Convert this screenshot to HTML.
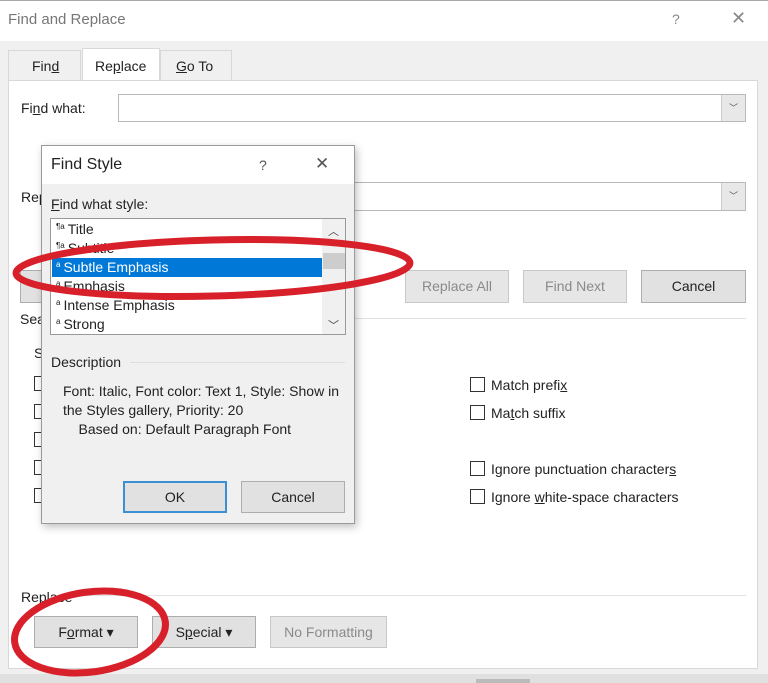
<!DOCTYPE html><html><head><style>
body{margin:0;width:768px;height:683px;background:#f0f0f0;font-family:"Liberation Sans",sans-serif;font-size:14px;color:#222;position:relative;overflow:hidden}
.a{position:absolute}
.btn{position:absolute;background:#e1e1e1;border:1px solid #adadad;box-sizing:border-box;text-align:center;font-size:14px}
.dis{color:#8a8a8a;border-color:#c8c8c8;background:#e6e6e6}
.cb{position:absolute;width:13px;height:13px;border:1px solid #333;background:#fff}
.inp{position:absolute;background:#fff;border:1px solid #b8b8b8;box-sizing:border-box}
.dd{position:absolute;right:0;top:0;width:24px;height:100%;background:#e8e8e8;border-left:1px solid #ccc;box-sizing:border-box;font-size:9px;color:#555;text-align:center;line-height:26px}
u{text-decoration:underline}
.row{position:absolute;left:1px;width:270px;height:19px;line-height:19px;padding-left:4px;box-sizing:border-box;white-space:nowrap}
.row i{font-style:normal;font-size:8px;position:relative;top:-5px;margin-right:3px}
</style></head><body>
<div class="a" style="left:0;top:0;width:768px;height:40px;background:#fff;border-top:1px solid #aaa"></div>
<div class="a" style="left:8px;top:11px;font-size:15px;color:#777">Find and Replace</div>
<div class="a" style="left:672px;top:11px;color:#888;font-size:14px">?</div>
<div class="a" style="left:731px;top:8px;color:#888;font-size:18px">✕</div>
<div class="a" style="left:8px;top:50px;width:73px;height:30px;border:1px solid #d8d8d8;border-bottom:none;box-sizing:border-box"></div>
<div class="a" style="left:32px;top:58px">Fin<u>d</u></div>
<div class="a" style="left:82px;top:48px;width:78px;height:34px;background:#fff;border:1px solid #d8d8d8;border-bottom:none;box-sizing:border-box"></div>
<div class="a" style="left:95px;top:58px">Re<u>p</u>lace</div>
<div class="a" style="left:160px;top:50px;width:72px;height:30px;border:1px solid #d8d8d8;border-bottom:none;box-sizing:border-box"></div>
<div class="a" style="left:176px;top:58px"><u>G</u>o To</div>
<div class="a" style="left:8px;top:80px;width:750px;height:589px;background:#fff;border:1px solid #d8d8d8;box-sizing:border-box"></div>
<div class="a" style="left:21px;top:100px">Fi<u>n</u>d what:</div>
<div class="inp" style="left:118px;top:94px;width:628px;height:28px"><div class="dd">﹀</div></div>
<div class="a" style="left:21px;top:189px">Rep</div>
<div class="inp" style="left:118px;top:182px;width:628px;height:29px"><div class="dd">﹀</div></div>
<div class="btn" style="left:20px;top:270px;width:100px;height:33px"></div>
<div class="btn dis" style="left:405px;top:270px;width:104px;height:33px;line-height:31px">Replace All</div>
<div class="btn dis" style="left:523px;top:270px;width:104px;height:33px;line-height:31px">Find Next</div>
<div class="btn" style="left:641px;top:270px;width:105px;height:33px;line-height:31px">Cancel</div>
<div class="a" style="left:20px;top:318px;width:726px;height:1px;background:#e3e3e3"></div>
<div class="a" style="left:20px;top:311px">Sea</div>
<div class="a" style="left:34px;top:345px">S</div>
<div class="cb" style="left:34px;top:376px"></div><div class="cb" style="left:34px;top:404px"></div><div class="cb" style="left:34px;top:432px"></div><div class="cb" style="left:34px;top:460px"></div><div class="cb" style="left:34px;top:488px"></div>
<div class="cb" style="left:470px;top:377px"></div><div class="a" style="left:491px;top:377px">Match prefi<u>x</u></div>
<div class="cb" style="left:470px;top:405px"></div><div class="a" style="left:491px;top:405px">Ma<u>t</u>ch suffix</div>
<div class="cb" style="left:470px;top:461px"></div><div class="a" style="left:491px;top:461px">Ignore punctuation character<u>s</u></div>
<div class="cb" style="left:470px;top:489px"></div><div class="a" style="left:491px;top:489px">Ignore <u>w</u>hite-space characters</div>
<div class="a" style="left:70px;top:595px;width:676px;height:1px;background:#e3e3e3"></div>
<div class="a" style="left:21px;top:589px">Replace</div>
<div class="btn" style="left:34px;top:616px;width:104px;height:32px;line-height:30px">F<u>o</u>rmat ▾</div>
<div class="btn" style="left:152px;top:616px;width:104px;height:32px;line-height:30px">S<u>p</u>ecial ▾</div>
<div class="btn dis" style="left:270px;top:616px;width:117px;height:32px;line-height:30px">No Formatting</div>
<div class="a" style="left:0;top:674px;width:768px;height:9px;background:#e0e0e0"></div>
<div class="a" style="left:476px;top:679px;width:54px;height:4px;background:#bbb"></div>

<div class="a" style="left:41px;top:145px;width:314px;height:379px;background:#f0f0f0;border:1px solid #9a9a9a;box-sizing:border-box;box-shadow:2px 3px 8px rgba(0,0,0,.25)"></div>
<div class="a" style="left:42px;top:146px;width:312px;height:38px;background:#fff"></div>
<div class="a" style="left:51px;top:156px;font-size:16px">Find Style</div>
<div class="a" style="left:259px;top:157px;color:#555">?</div>
<div class="a" style="left:315px;top:154px;color:#555;font-size:17px">✕</div>
<div class="a" style="left:51px;top:196px"><u>F</u>ind what style:</div>
<div class="a" style="left:50px;top:218px;width:296px;height:117px;background:#fff;border:1px solid #999;box-sizing:border-box;overflow:hidden">
<div class="a" style="left:271px;top:0;width:23px;height:115px;background:#f0f0f0"></div>
<div class="a" style="left:272px;top:34px;width:22px;height:16px;background:#cdcdcd"></div>
<div class="a" style="left:277px;top:4px;font-size:11px;color:#444">︿</div>
<div class="a" style="left:277px;top:98px;font-size:11px;color:#444">﹀</div>
<div class="row" style="top:1px"><i>¶a</i>Title</div>
<div class="row" style="top:20px"><i>¶a</i>Subtitle</div>
<div class="row" style="top:39px;background:#0078d7;color:#fff"><i>a</i>Subtle Emphasis</div>
<div class="row" style="top:58px"><i>a</i>Emphasis</div>
<div class="row" style="top:77px"><i>a</i>Intense Emphasis</div>
<div class="row" style="top:96px"><i>a</i>Strong</div>
</div>
<div class="a" style="left:51px;top:354px">Description</div>
<div class="a" style="left:130px;top:362px;width:215px;height:1px;background:#ddd"></div>
<div class="a" style="left:63px;top:382px;line-height:19px">Font: Italic, Font color: Text 1, Style: Show in<br>the Styles gallery, Priority: 20<br>&nbsp;&nbsp;&nbsp;&nbsp;Based on: Default Paragraph Font</div>
<div class="btn" style="left:123px;top:481px;width:104px;height:32px;line-height:28px;border:2px solid #3c8fd0">OK</div>
<div class="btn" style="left:241px;top:481px;width:104px;height:32px;line-height:30px">Cancel</div>

<svg class="a" style="left:0;top:0" width="768" height="683">
<ellipse cx="213" cy="268" rx="197" ry="28" fill="none" stroke="#d8202a" stroke-width="7" transform="rotate(-1.5 213 268)"/>
<ellipse cx="90" cy="632" rx="76" ry="40" fill="none" stroke="#d8202a" stroke-width="7" transform="rotate(-8 90 632)"/>
</svg>
</body></html>
